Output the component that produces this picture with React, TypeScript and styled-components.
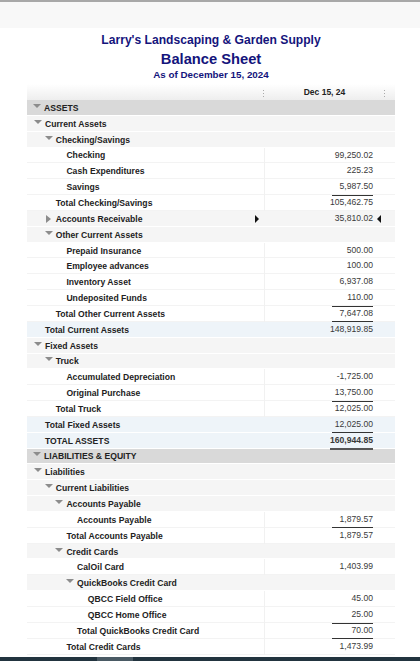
import React from "react";
import styled, { createGlobalStyle } from "styled-components";

type RowKind = "section" | "group" | "plain" | "total";
type Line = "single" | "double";

interface RowData {
  label: string;
  level: number;
  kind: RowKind;
  arrow?: "down" | "right";
  value?: string;
  line?: Line;
  strong?: boolean;
  marked?: boolean;
}

const rows: RowData[] = [
  { label: "ASSETS", level: 0, kind: "section", arrow: "down" },
  { label: "Current Assets", level: 1, kind: "group", arrow: "down" },
  { label: "Checking/Savings", level: 2, kind: "group", arrow: "down" },
  { label: "Checking", level: 3, kind: "plain", value: "99,250.02" },
  { label: "Cash Expenditures", level: 3, kind: "plain", value: "225.23" },
  { label: "Savings", level: 3, kind: "plain", value: "5,987.50", line: "single" },
  { label: "Total Checking/Savings", level: 2, kind: "plain", value: "105,462.75" },
  { label: "Accounts Receivable", level: 2, kind: "group", arrow: "right", value: "35,810.02", marked: true },
  { label: "Other Current Assets", level: 2, kind: "group", arrow: "down" },
  { label: "Prepaid Insurance", level: 3, kind: "plain", value: "500.00" },
  { label: "Employee advances", level: 3, kind: "plain", value: "100.00" },
  { label: "Inventory Asset", level: 3, kind: "plain", value: "6,937.08" },
  { label: "Undeposited Funds", level: 3, kind: "plain", value: "110.00", line: "single" },
  { label: "Total Other Current Assets", level: 2, kind: "plain", value: "7,647.08", line: "single" },
  { label: "Total Current Assets", level: 1, kind: "total", value: "148,919.85" },
  { label: "Fixed Assets", level: 1, kind: "group", arrow: "down" },
  { label: "Truck", level: 2, kind: "group", arrow: "down" },
  { label: "Accumulated Depreciation", level: 3, kind: "plain", value: "-1,725.00" },
  { label: "Original Purchase", level: 3, kind: "plain", value: "13,750.00", line: "single" },
  { label: "Total Truck", level: 2, kind: "plain", value: "12,025.00" },
  { label: "Total Fixed Assets", level: 1, kind: "total", value: "12,025.00", line: "single" },
  { label: "TOTAL ASSETS", level: 1, kind: "total", value: "160,944.85", line: "double", strong: true },
  { label: "LIABILITIES & EQUITY", level: 0, kind: "section", arrow: "down" },
  { label: "Liabilities", level: 1, kind: "group", arrow: "down" },
  { label: "Current Liabilities", level: 2, kind: "group", arrow: "down" },
  { label: "Accounts Payable", level: 3, kind: "group", arrow: "down" },
  { label: "Accounts Payable", level: 4, kind: "plain", value: "1,879.57", line: "single" },
  { label: "Total Accounts Payable", level: 3, kind: "plain", value: "1,879.57" },
  { label: "Credit Cards", level: 3, kind: "group", arrow: "down" },
  { label: "CalOil Card", level: 4, kind: "plain", value: "1,403.99" },
  { label: "QuickBooks Credit Card", level: 4, kind: "group", arrow: "down" },
  { label: "QBCC Field Office", level: 5, kind: "plain", value: "45.00" },
  { label: "QBCC Home Office", level: 5, kind: "plain", value: "25.00", line: "single" },
  { label: "Total QuickBooks Credit Card", level: 4, kind: "plain", value: "70.00", line: "single" },
  { label: "Total Credit Cards", level: 3, kind: "plain", value: "1,473.99" },
];

const rowBackground: Record<RowKind, string> = {
  section: "#d9d9d9",
  group: "#f5f5f5",
  plain: "#ffffff",
  total: "#eef4f9",
};

const App = () => (
  <>
    <GlobalStyle />
    <Page>
      <TopBand />
      <Titles>
        <Company>Larry's Landscaping &amp; Garden Supply</Company>
        <ReportName>Balance Sheet</ReportName>
        <ReportDate>As of December 15, 2024</ReportDate>
      </Titles>
      <Report>
        <HeaderRow>
          <HeaderLabel>
            <Grip />
          </HeaderLabel>
          <HeaderValue>
            Dec 15, 24
            <Grip />
          </HeaderValue>
        </HeaderRow>
        {rows.map((row, index) => (
          <Row key={index} $kind={row.kind}>
            <LabelCell $level={row.level}>
              {row.arrow && <Arrow $direction={row.arrow} />}
              {row.label}
              {row.marked && <MarkerRight />}
            </LabelCell>
            <ValueCell $kind={row.kind}>
              {row.value && (
                <Amount $line={row.line} $strong={row.strong}>
                  {row.value}
                </Amount>
              )}
              {row.marked && <MarkerLeft />}
            </ValueCell>
          </Row>
        ))}
      </Report>
      <BottomBar>
        <BottomTab />
      </BottomBar>
    </Page>
  </>
);

const GlobalStyle = createGlobalStyle`
  html, body {
    margin: 0;
    padding: 0;
    background: #ffffff;
  }
`;

const Page = styled.div`
  width: 420px;
  height: 661px;
  overflow: hidden;
  display: flex;
  flex-direction: column;
  font-family: "Liberation Sans", Arial, sans-serif;
  color: #222222;
`;

const TopBand = styled.div`
  height: 26px;
  flex: none;
  background: #f8f8f8;
  border-top: 2px solid #a8a8a8;
`;

const Titles = styled.div`
  height: 56px;
  flex: none;
  display: flex;
  flex-direction: column;
  align-items: center;
  padding-left: 2px;
  color: #14147c;
  font-weight: bold;
`;

const Company = styled.div`
  margin-top: 5px;
  font-size: 12.1px;
  line-height: 15px;
`;

const ReportName = styled.div`
  margin-top: 2px;
  font-size: 14.7px;
  line-height: 18px;
`;

const ReportDate = styled.div`
  font-size: 9.8px;
  line-height: 13px;
`;

const Report = styled.div`
  margin: 0 25px 0 27px;
  flex: 1;
  min-height: 0;
`;

const HeaderRow = styled.div`
  height: 16px;
  display: grid;
  grid-template-columns: 237px 131px;
  background: linear-gradient(#ffffff, #eeeeee);
`;

const HeaderLabel = styled.div`
  position: relative;
`;

const HeaderValue = styled.div`
  position: relative;
  font-size: 8.5px;
  font-weight: bold;
  line-height: 16px;
  text-align: center;
  padding-right: 10px;
`;

const Grip = styled.span`
  position: absolute;
  right: 0;
  top: 6px;
  width: 1px;
  height: 8px;
  background: repeating-linear-gradient(#aaaaaa 0 1px, transparent 1px 3px);
  ${HeaderValue} & {
    right: 10px;
  }
`;

const Row = styled.div<{ $kind: RowKind }>`
  height: 15.85px;
  display: grid;
  grid-template-columns: 237px 131px;
  background: ${(p) => rowBackground[p.$kind]};
  box-shadow: inset 0 -1px 0 ${(p) => (p.$kind === "plain" ? "#f3f3f3" : "#ffffff")};
`;

const LabelCell = styled.div<{ $level: number }>`
  position: relative;
  display: flex;
  align-items: center;
  padding-left: ${(p) => (p.$level === 0 ? 17 : 18 + (p.$level - 1) * 10.7)}px;
  font-size: 8.6px;
  font-weight: bold;
  letter-spacing: 0.02px;
  white-space: nowrap;
`;

const Arrow = styled.span<{ $direction: "down" | "right" }>`
  flex: none;
  width: 0;
  height: 0;
  margin-left: -11px;
  margin-right: 3px;
  ${(p) =>
    p.$direction === "down"
      ? `
    margin-top: -4px;
    border-left: 4px solid transparent;
    border-right: 4px solid transparent;
    border-top: 4px solid #8c8c8c;
  `
      : `
    margin-left: -10px;
    margin-right: 5px;
    border-top: 4px solid transparent;
    border-bottom: 4px solid transparent;
    border-left: 5px solid #8c8c8c;
  `}
`;

const ValueCell = styled.div<{ $kind: RowKind }>`
  position: relative;
  display: flex;
  align-items: center;
  justify-content: flex-end;
  padding-right: 22px;
  font-size: 8.6px;
  color: #3a3a3a;
  border-left: 1px solid ${(p) => (p.$kind === "plain" ? "#f1f1f1" : "transparent")};
`;

const Amount = styled.span<{ $line?: Line; $strong?: boolean }>`
  box-sizing: border-box;
  align-self: stretch;
  min-width: 41px;
  line-height: 15.5px;
  text-align: right;
  font-weight: ${(p) => (p.$strong ? "bold" : "normal")};
  border-bottom: ${(p) =>
    p.$line === "double" ? "2px solid #555555" : p.$line === "single" ? "1px solid #333333" : "none"};
`;

const MarkerRight = styled.span`
  position: absolute;
  right: 5px;
  top: 4px;
  border-top: 4px solid transparent;
  border-bottom: 4px solid transparent;
  border-left: 4px solid #111111;
`;

const MarkerLeft = styled.span`
  position: absolute;
  right: 14px;
  top: 4px;
  border-top: 4px solid transparent;
  border-bottom: 4px solid transparent;
  border-right: 4px solid #111111;
`;

const BottomBar = styled.div`
  height: 4px;
  flex: none;
  background: #22343f;
  display: flex;
  padding-left: 97px;
`;

const BottomTab = styled.div`
  width: 36px;
  background: #4a5a64;
`;

export default App;
